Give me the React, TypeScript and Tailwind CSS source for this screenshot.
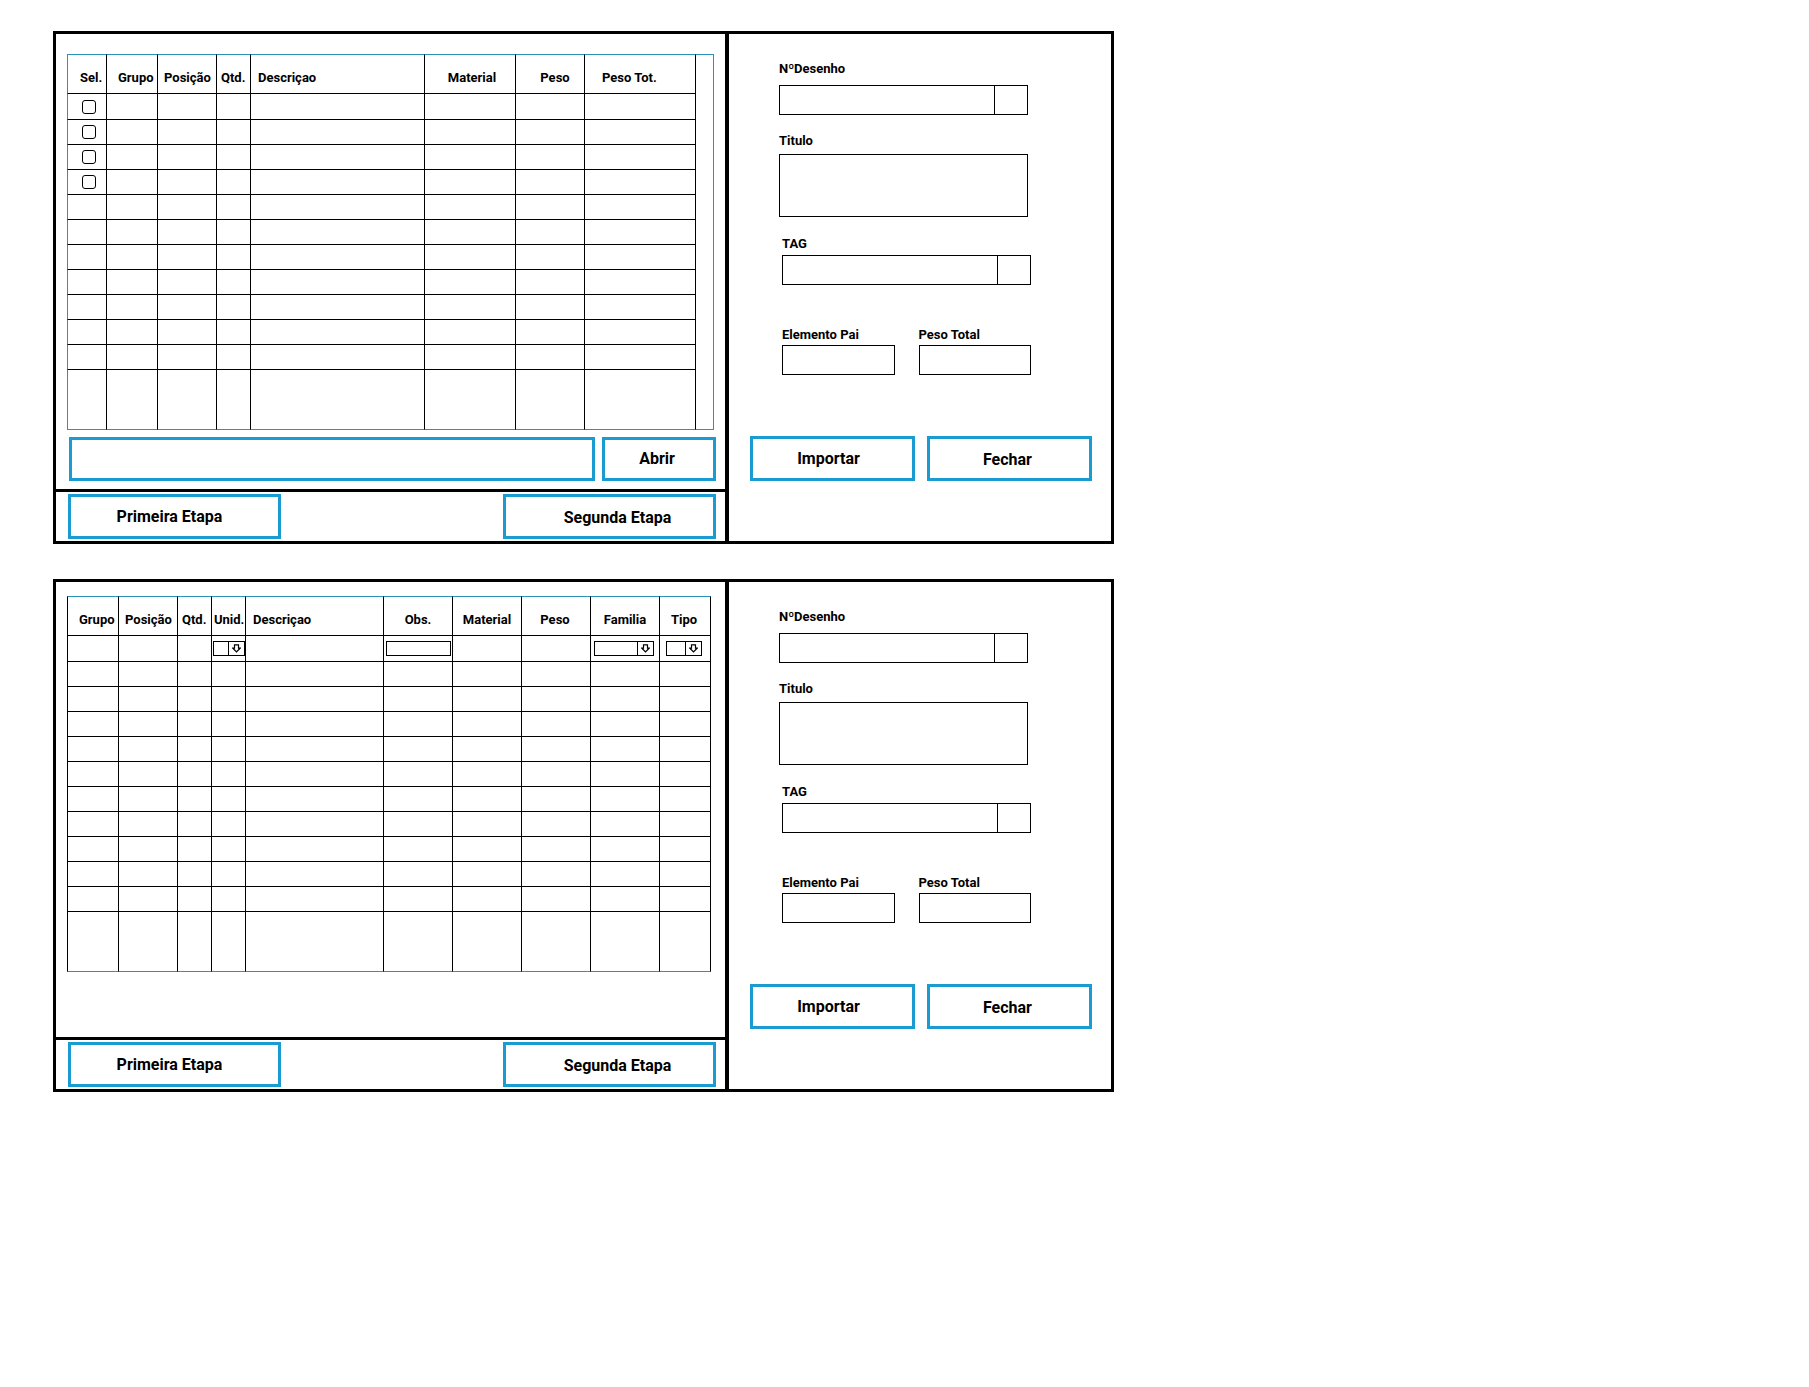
import type { ReactNode } from "react";

type Column = { label: string; width: string; head: string };

const importColumns: Column[] = [
  { label: "Sel.", width: "w-[40px]", head: "pl-3 text-left" },
  { label: "Grupo", width: "w-[51px]", head: "pl-[11px] text-left" },
  { label: "Posição", width: "w-[59px]", head: "pl-1.5 text-left" },
  { label: "Qtd.", width: "w-[34px]", head: "pl-1 text-left" },
  { label: "Descriçao", width: "", head: "pl-[7px] text-left" },
  { label: "Material", width: "w-[91px]", head: "pl-1 text-center" },
  { label: "Peso", width: "w-[69px]", head: "pl-2.5 text-center" },
  { label: "Peso Tot.", width: "w-[111px]", head: "pl-[17px] text-left" },
];

const detailColumns: Column[] = [
  { label: "Grupo", width: "w-[52px]", head: "pl-[11px] text-left" },
  { label: "Posição", width: "w-[59px]", head: "pl-1.5 text-left" },
  { label: "Qtd.", width: "w-[34px]", head: "pl-1 text-left" },
  { label: "Unid.", width: "w-[34px]", head: "pl-0.5 text-left" },
  { label: "Descriçao", width: "", head: "pl-[7px] text-left" },
  { label: "Obs.", width: "w-[69px]", head: "text-center" },
  { label: "Material", width: "w-[69px]", head: "text-center" },
  { label: "Peso", width: "w-[69px]", head: "pr-0.5 text-center" },
  { label: "Familia", width: "w-[69px]", head: "text-center" },
  { label: "Tipo", width: "w-[51px]", head: "pr-0.5 text-center" },
];

const ROWS = 12;

function rowHeight(row: number) {
  if (row === 0) return "h-[26px]";
  return row === ROWS - 1 ? "h-[60px]" : "h-[25px]";
}

function PartsTable({
  columns,
  leftBorder,
  cell,
}: {
  columns: Column[];
  leftBorder: string;
  cell: (row: number, label: string) => ReactNode;
}) {
  return (
    <table className="w-full table-fixed border-separate border-spacing-0">
      <colgroup>
        {columns.map((c) => (
          <col key={c.label} className={c.width} />
        ))}
      </colgroup>
      <thead>
        <tr className="h-[40px]">
          {columns.map((c, i) => (
            <th
              key={c.label}
              scope="col"
              className={`border-t border-r border-b border-t-[#2b93b9] border-r-black border-b-black py-0 pt-2 text-[13px] leading-5 font-bold whitespace-nowrap ${c.head} ${i === 0 ? leftBorder : ""}`}
            >
              {c.label}
            </th>
          ))}
        </tr>
      </thead>
      <tbody>
        {Array.from({ length: ROWS }, (_, row) => (
          <tr key={row} className={rowHeight(row)}>
            {columns.map((c, i) => (
              <td
                key={c.label}
                className={`border-r border-b border-r-black p-0 align-middle ${row === ROWS - 1 ? "border-b-[#2b93b9]" : "border-b-black"} ${i === 0 ? leftBorder : ""}`}
              >
                {cell(row, c.label)}
              </td>
            ))}
          </tr>
        ))}
      </tbody>
    </table>
  );
}

function DownArrow() {
  return (
    <svg width="9" height="9" viewBox="0 0 9 9" fill="none" stroke="black" strokeWidth="1.2" aria-hidden="true">
      <path d="M2.5 0.8h4v3.4h1.6L4.5 7.9 0.9 4.2h1.6z" />
    </svg>
  );
}

function MiniSelect({ label, className }: { label: string; className: string }) {
  return (
    <span className={`relative flex h-[15px] border border-black ${className}`}>
      <select aria-label={label} className="h-full w-full appearance-none bg-transparent text-[10px] outline-none">
        <option value=""></option>
      </select>
      <span className="pointer-events-none absolute inset-y-0 right-0 flex w-4 items-center justify-center border-l border-black">
        <DownArrow />
      </span>
    </span>
  );
}

function ActionButton({ className, children }: { className: string; children: ReactNode }) {
  return (
    <button
      type="button"
      className={`border-[3px] border-[#1a9bd2] bg-white text-base leading-6 font-bold ${className}`}
    >
      {children}
    </button>
  );
}

function LookupField({ id, label, gap }: { id: string; label: string; gap: string }) {
  return (
    <div className={`flex flex-col ${gap}`}>
      <label htmlFor={id}>{label}</label>
      <div className="flex h-[30px] border border-black">
        <input id={id} type="text" className="min-w-0 flex-1 px-2 outline-none" />
        <button type="button" aria-label={`Procurar ${label}`} className="w-[33px] border-l border-black" />
      </div>
    </div>
  );
}

function SmallField({ id, label }: { id: string; label: string }) {
  return (
    <div className="flex min-w-0 flex-1 flex-col">
      <label htmlFor={id}>{label}</label>
      <input id={id} type="text" className="h-[30px] w-full border border-black px-2 outline-none" />
    </div>
  );
}

function DrawingForm({ prefix }: { prefix: string }) {
  return (
    <form className="flex w-[382px] shrink-0 flex-col pt-[25px] text-[13px] leading-5 font-bold">
      <div className="ml-[50px] flex w-[249px] flex-col gap-4">
        <LookupField id={`${prefix}-desenho`} label="NºDesenho" gap="gap-1.5" />
        <div className="flex flex-col gap-[3px]">
          <label htmlFor={`${prefix}-titulo`}>Titulo</label>
          <textarea
            id={`${prefix}-titulo`}
            className="h-[63px] w-full resize-none border border-black px-2 outline-none"
          />
        </div>
      </div>
      <div className="mt-[17px] ml-[53px] flex w-[249px] flex-col gap-10">
        <LookupField id={`${prefix}-tag`} label="TAG" gap="gap-px" />
        <div className="flex gap-6">
          <SmallField id={`${prefix}-pai`} label="Elemento Pai" />
          <SmallField id={`${prefix}-peso`} label="Peso Total" />
        </div>
      </div>
      <div className="mt-[61px] grid grid-cols-2 gap-3 pr-[19px] pl-[21px]">
        <ActionButton className="h-[45px] pr-2">Importar</ActionButton>
        <ActionButton className="h-[45px] pt-0.5 pr-1">Fechar</ActionButton>
      </div>
    </form>
  );
}

function StageWindow({ prefix, children }: { prefix: string; children: ReactNode }) {
  return (
    <section className="flex w-full max-w-[1061px] border-[3px] border-black">
      <div className="flex min-w-0 flex-1 flex-col border-r-4 border-black">
        <div className="flex min-h-[458px] flex-col border-b-[3px] border-black pr-[9px] pl-[11px]">{children}</div>
        <div className="flex justify-between py-0.5 pr-[9px] pl-3">
          <ActionButton className="h-[45px] w-[213px] pr-2.5">Primeira Etapa</ActionButton>
          <ActionButton className="h-[45px] w-[213px] pt-0.5 pl-4">Segunda Etapa</ActionButton>
        </div>
      </div>
      <DrawingForm prefix={prefix} />
    </section>
  );
}

function importCell(row: number, label: string) {
  if (label !== "Sel." || row > 3) return null;
  return (
    <input
      type="checkbox"
      aria-label={`Selecionar linha ${row + 1}`}
      className="ml-3.5 block size-3.5 appearance-none rounded-[3px] border border-black checked:bg-black"
    />
  );
}

function detailCell(row: number, label: string) {
  if (row !== 0) return null;
  if (label === "Unid.") return <MiniSelect label="Unid." className="ml-px w-8" />;
  if (label === "Familia") return <MiniSelect label="Familia" className="ml-[3px] w-[60px]" />;
  if (label === "Tipo") return <MiniSelect label="Tipo" className="ml-1.5 w-9" />;
  if (label === "Obs.")
    return (
      <input
        type="text"
        aria-label="Obs."
        className="mx-auto block h-[15px] w-[65px] border border-black px-1 text-[10px] outline-none"
      />
    );
  return null;
}

export default function App() {
  return (
    <main className="flex min-h-screen flex-col gap-[35px] bg-white px-[53px] pt-[31px] pb-8 font-['Roboto',sans-serif] text-black">
      <StageWindow prefix="primeira">
        <div className="mt-5 mr-0.5 flex">
          <PartsTable columns={importColumns} leftBorder="border-l border-l-[#2b93b9]" cell={importCell} />
          <div className="w-[18px] shrink-0 border-t border-r border-b border-[#2b93b9]" />
        </div>
        <div className="mt-[7px] flex gap-[7px] pl-0.5">
          <input
            type="text"
            aria-label="Arquivo"
            className="h-11 min-w-0 flex-1 border-[3px] border-[#1a9bd2] px-3 text-base outline-none"
          />
          <ActionButton className="h-11 w-[114px] pr-1">Abrir</ActionButton>
        </div>
      </StageWindow>
      <StageWindow prefix="segunda">
        <div className="mt-3.5 mr-[5px]">
          <PartsTable columns={detailColumns} leftBorder="border-l border-l-black" cell={detailCell} />
        </div>
      </StageWindow>
    </main>
  );
}
